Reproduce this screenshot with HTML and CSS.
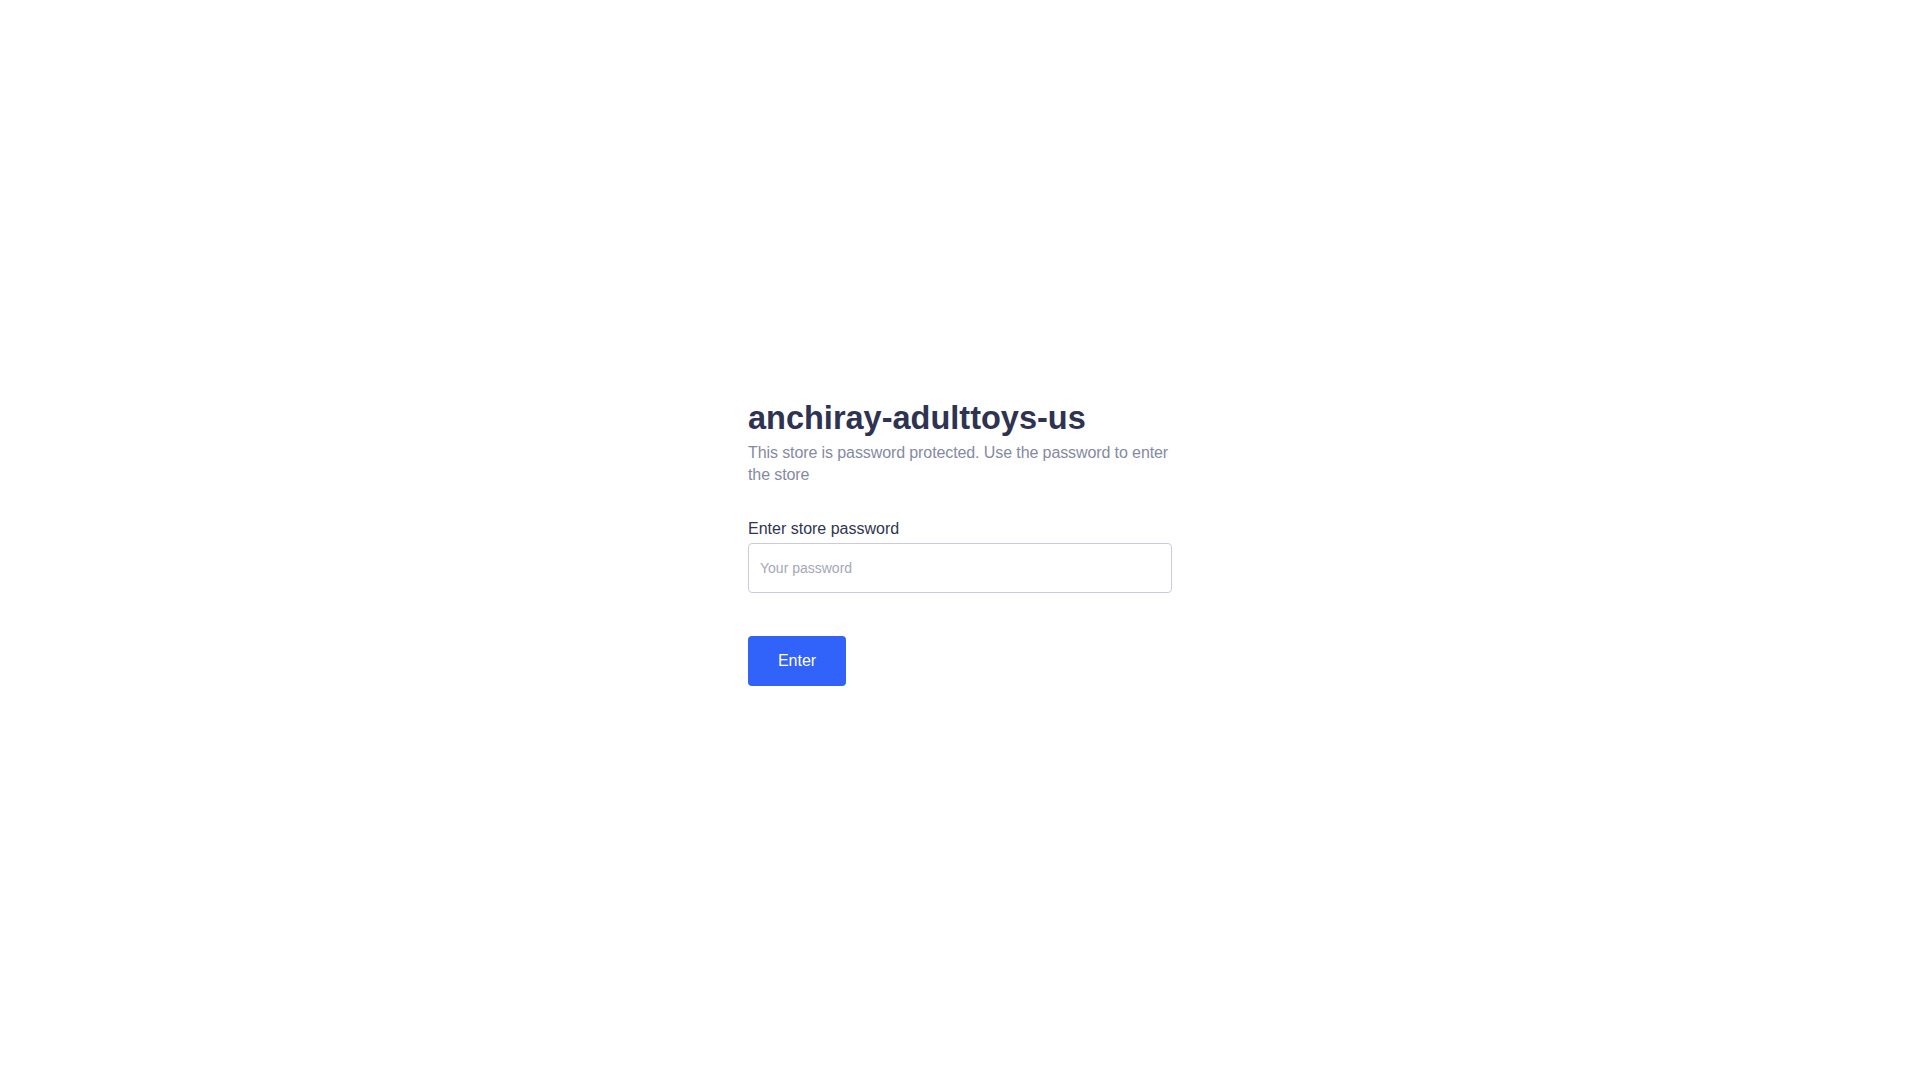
FILE: index.html
```html
<!DOCTYPE html>
<html lang="en">
<head>
    <meta charset="UTF-8">
    <meta name="viewport" content="width=device-width, initial-scale=1.0">
    <title>anchiray-adulttoys-us</title>
    <link rel="stylesheet" href="styles.css">
</head>
<body>
    <main class="page">
        <div class="password-box">
            <h1>anchiray-adulttoys-us</h1>
            <p class="intro">This store is password protected. Use the password to enter the store</p>

            <form class="password-form" onsubmit="return false;">
                <label for="password">Enter store password</label>
                <input type="password" id="password" name="password" placeholder="Your password">
                <button type="submit">Enter</button>
            </form>
        </div>
    </main>
</body>
</html>
```

FILE: styles.css
```css
* {
    margin: 0;
    padding: 0;
    box-sizing: border-box;
}

body {
    font-family: 'Liberation Sans', Arial, Helvetica, sans-serif;
    background-color: #ffffff;
    color: #30354f;
}

.page {
    min-height: 100vh;
    padding-top: 3px;
    display: flex;
    align-items: center;
    justify-content: center;
}

.password-box {
    width: 424px;
}

h1 {
    font-size: 32.5px;
    font-weight: bold;
    line-height: 40px;
    color: #2e3352;
}

.intro {
    margin-top: 4px;
    font-size: 16px;
    line-height: 22px;
    letter-spacing: -0.1px;
    color: #858aa3;
}

.password-form {
    display: flex;
    flex-direction: column;
    align-items: flex-start;
    margin-top: 33px;
}

.password-form label {
    font-size: 16px;
    line-height: 20px;
    color: #30354f;
    margin-bottom: 4px;
}

.password-form input {
    width: 100%;
    height: 50px;
    padding: 0 11px;
    border: 1px solid #c9cdd9;
    border-radius: 4px;
    font-family: inherit;
    font-size: 14px;
    color: #30354f;
    outline: none;
}

.password-form input::placeholder {
    color: #a4a8b8;
}

.password-form button {
    margin-top: 43px;
    width: 98px;
    height: 50px;
    border: none;
    border-radius: 4px;
    background-color: #3162fa;
    color: #ffffff;
    font-family: inherit;
    font-size: 16px;
    cursor: pointer;
}
```
